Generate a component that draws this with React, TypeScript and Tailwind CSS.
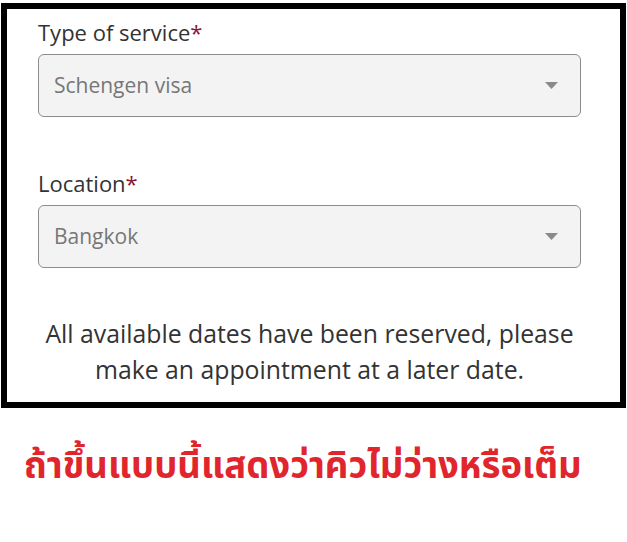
const labelFont = { fontFamily: '"Open Sans", "Noto Sans", sans-serif' };

function SelectField({ label, value }: { label: string; value: string }) {
  return (
    <div className="flex flex-col">
      <label className="text-[22px] leading-[30px] text-[#333333]">
        {label}
        <span className="text-[#8b1538]">*</span>
      </label>
      <div className="mt-[7px] flex h-[63px] w-[543px] items-center justify-between rounded-[6px] border border-[#8c8c8c] bg-[#f3f3f3] pl-[15px] pr-[22px]">
        <span className="text-[21px] text-[#777777]">{value}</span>
        <svg width="13" height="7" viewBox="0 0 13 7">
          <path d="M0 0 L13 0 L6.5 7 Z" fill="#8a8a8a" />
        </svg>
      </div>
    </div>
  );
}

export default function App() {
  return (
    <div className="min-h-[542px] bg-white pl-[1px] pt-[3px]">
      <div
        className="w-[625px] border-[6px] border-black pb-[15px] pl-[31px] pr-[39px] pt-[8px]"
        style={labelFont}
      >
        <SelectField label="Type of service" value="Schengen visa" />
        <div className="mt-[51px]">
          <SelectField label="Location" value="Bangkok" />
        </div>
        <p className="mt-[47px] w-[543px] text-center text-[24.8px] leading-[36px] text-[#333333]">
          All available dates have been reserved, please make an appointment at a later date.
        </p>
      </div>
      <p
        className="mt-[37px] pl-[23px] text-[36.5px] font-bold leading-[44px] text-[#e1252d]"
        style={{ fontFamily: '"Noto Sans Thai", Tahoma, "Noto Sans", sans-serif' }}
      >
        ถ้าขึ้นแบบนี้แสดงว่าคิวไม่ว่างหรือเต็ม
      </p>
    </div>
  );
}
